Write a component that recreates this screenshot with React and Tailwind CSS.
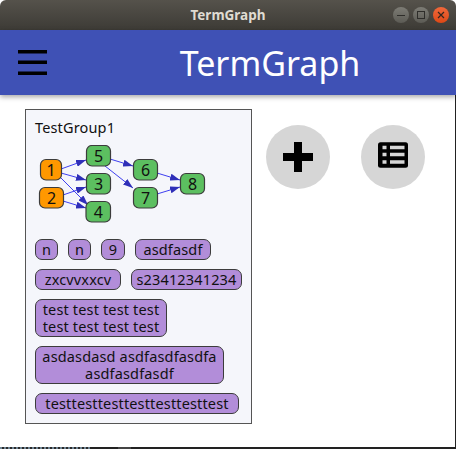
import React from "react";

const nodes = [
  { label: "1", x: 40.5, y: 159.5, w: 21, fill: "#ff9800" },
  { label: "2", x: 39.5, y: 187.5, w: 24, fill: "#ff9800" },
  { label: "5", x: 86.5, y: 145.5, w: 24, fill: "#5cbf60" },
  { label: "3", x: 86.5, y: 173.5, w: 24, fill: "#5cbf60" },
  { label: "4", x: 86, y: 201.5, w: 24.5, fill: "#5cbf60" },
  { label: "6", x: 133.5, y: 159.5, w: 24, fill: "#5cbf60" },
  { label: "7", x: 133.5, y: 187.5, w: 24, fill: "#5cbf60" },
  { label: "8", x: 180.5, y: 173.5, w: 24, fill: "#5cbf60" },
];

const edges = [
  [61, 169, 86, 160],
  [61, 173, 86, 180],
  [60, 177, 88, 205],
  [63, 195, 86, 187],
  [63, 201, 86, 208],
  [110, 159, 133, 166],
  [105, 166, 133, 188],
  [157, 173, 180, 180],
  [157, 194, 180, 187],
];

function Graph() {
  return (
    <svg width="206" height="82" viewBox="35 145 206 82" className="mt-[8px] mb-3 block">
      <defs>
        <marker id="arrow" markerUnits="userSpaceOnUse" markerWidth="10" markerHeight="7" refX="10" refY="3.5" orient="auto">
          <path d="M0 0 L10 3.5 L0 7 Z" fill="#2f2fb8" />
        </marker>
      </defs>
      {edges.map((e, i) => (
        <line key={i} x1={e[0]} y1={e[1]} x2={e[2]} y2={e[3]} stroke="#3f3ff0" strokeWidth="1" markerEnd="url(#arrow)" />
      ))}
      {nodes.map((n) => (
        <g key={n.label}>
          <rect x={n.x} y={n.y} width={n.w} height="20.5" rx="5.5" fill={n.fill} stroke="#3c3c3c" strokeWidth="1.2" />
          <text x={n.x + n.w / 2} y={n.y + 16} textAnchor="middle" fontSize="16" fill="#111">
            {n.label}
          </text>
        </g>
      ))}
    </svg>
  );
}

const chip = "h-[21px] rounded-[7px] border border-[#3c3c3c] bg-[#b28dd9] text-center text-[14.5px] leading-[18px] tracking-[0.15px] text-[#111] whitespace-nowrap";
const bigChip = "rounded-[7px] border border-[#3c3c3c] bg-[#b28dd9] text-center text-[14.5px] leading-[17px] tracking-[0.15px] text-[#111] py-[1px]";

export default function App() {
  return (
    <div className="flex h-[449px] w-[456px] flex-col bg-white font-['Noto_Sans',sans-serif]">
      {/* window title bar */}
      <div className="relative flex h-[30px] items-center justify-center rounded-t-[6px] bg-gradient-to-b from-[#55524b] to-[#3d3b36]">
        <span className="text-[13.5px] font-bold text-[#dfdbd2]">TermGraph</span>
        <div className="absolute right-[7px] top-[7px] flex gap-1">
          <div className="flex h-4 w-4 items-center justify-center rounded-full bg-gradient-to-b from-[#7d7c75] to-[#5c5b55]">
            <div className="h-[1px] w-2 bg-[#2e2d2a]"></div>
          </div>
          <div className="flex h-4 w-4 items-center justify-center rounded-full bg-gradient-to-b from-[#7d7c75] to-[#5c5b55]">
            <div className="h-2 w-2 border border-[#2e2d2a]"></div>
          </div>
          <div className="flex h-4 w-4 items-center justify-center rounded-full bg-gradient-to-b from-[#f0683a] to-[#dd4814]">
            <svg width="8" height="8" viewBox="0 0 8 8">
              <path d="M1 1 L7 7 M7 1 L1 7" stroke="#33261f" strokeWidth="1.2" />
            </svg>
          </div>
        </div>
      </div>

      {/* app bar */}
      <div className="relative z-10 flex h-[65px] items-center bg-[#3f51b5] shadow-[0_2px_5px_rgba(0,0,0,0.35)]">
        <div className="w-[84px] pl-[18px]">
          <svg width="29" height="25" viewBox="0 0 29 25" className="block">
            <rect y="0" width="29" height="3.5" fill="#000" />
            <rect y="10.5" width="29" height="3.5" fill="#000" />
            <rect y="21.5" width="29" height="3.5" fill="#000" />
          </svg>
        </div>
        <div className="flex-1 text-center text-[34px] leading-none text-white">TermGraph</div>
      </div>

      {/* content */}
      <div className="flex flex-1 items-start border-r border-[#222] pl-[25px] pt-[14px]">
        <div className="h-[315px] w-[227px] border border-[#555] bg-[#f5f6fb] pl-[9px] pt-[7px]">
          <div className="text-[14.5px] leading-[20px] tracking-[0.15px] text-[#111]">TestGroup1</div>
          <Graph />
          <div className="flex flex-wrap gap-x-[10px] gap-y-[9px]">
            <div className={`${chip} w-[23px]`}>n</div>
            <div className={`${chip} w-[23px]`}>n</div>
            <div className={`${chip} w-[24px]`}>9</div>
            <div className={`${chip} w-[76px]`}>asdfasdf</div>
            <div className={`${chip} w-[86px]`}>zxcvvxxcv</div>
            <div className={`${chip} w-[111px]`}>s23412341234</div>
            <div className={`${bigChip} w-[132px]`}>test test test test test test test test</div>
            <div className={`${bigChip} w-[189px]`}>asdasdasd asdfasdfasdfa asdfasdfasdf</div>
            <div className={`${chip} w-[204px]`}>testtesttesttesttesttesttest</div>
          </div>
        </div>

        <div className="ml-[14px] mt-[16px] flex gap-[31px]">
          <div className="flex h-[64px] w-[64px] items-center justify-center rounded-full bg-[#d6d6d6]">
            <svg width="30" height="30" viewBox="0 0 30 30">
              <path d="M11 0 H19 V11 H30 V19 H19 V30 H11 V19 H0 V11 H11 Z" fill="#000" />
            </svg>
          </div>
          <div className="flex h-[64px] w-[64px] items-center justify-center rounded-full bg-[#d6d6d6]">
            <svg width="30" height="26" viewBox="0 0 30 25.5" className="mb-1">
              <rect width="30" height="25.5" rx="2.5" fill="#000" />
              <g fill="#d6d6d6">
                <rect x="4.5" y="3.5" width="4" height="3.5" />
                <rect x="4.5" y="10.5" width="4" height="3.5" />
                <rect x="4.5" y="18" width="4" height="3.5" />
                <rect x="12" y="3.5" width="14.5" height="3.5" />
                <rect x="12" y="10.5" width="14.5" height="3.5" />
                <rect x="12" y="18" width="14.5" height="3.5" />
              </g>
            </svg>
          </div>
        </div>
      </div>

      {/* whatever sits behind the window */}
      <div className="flex h-[2px] bg-[#222]">
        <div className="w-[90px] bg-[repeating-linear-gradient(90deg,#6f8494_0,#6f8494_2px,#2a2a2a_2px,#2a2a2a_4px)]"></div>
        <div className="ml-[28px] w-[13px] bg-[#444]"></div>
      </div>
    </div>
  );
}
